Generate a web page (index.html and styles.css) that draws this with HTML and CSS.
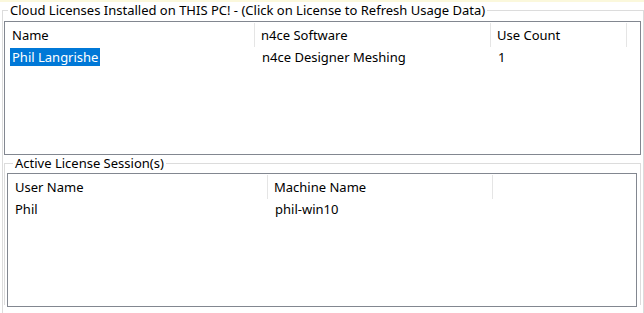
FILE: index.html
```html
<!DOCTYPE html>
<html>
<head>
<meta charset="utf-8">
<link rel="stylesheet" href="styles.css">
</head>
<body>
<div class="strip"></div>
<fieldset class="group group-outer">
  <legend class="legend legend-outer">Cloud Licenses Installed on THIS PC! - (Click on License to Refresh Usage Data)</legend>
  <div class="list list-licenses">
    <div class="row head">
      <div class="cell">Name</div>
      <div class="cell">n4ce Software</div>
      <div class="cell">Use Count</div>
      <div class="cell last"></div>
    </div>
    <div class="row item">
      <div class="cell"><span class="sel">Phil Langrishe</span></div>
      <div class="cell">n4ce Designer Meshing</div>
      <div class="cell">1</div>
      <div class="cell last"></div>
    </div>
  </div>
  <fieldset class="group group-inner">
    <legend class="legend legend-inner">Active License Session(s)</legend>
    <div class="list list-sessions">
      <div class="row head">
        <div class="cell">User Name</div>
        <div class="cell">Machine Name</div>
        <div class="cell last"></div>
      </div>
      <div class="row item">
        <div class="cell"><span class="plain">Phil</span></div>
        <div class="cell">phil-win10</div>
        <div class="cell last"></div>
      </div>
    </div>
  </fieldset>
</fieldset>
</body>
</html>
```
FILE: styles.css
```css
html, body {
  margin: 0;
  padding: 0;
  background: #ffffff;
  overflow: hidden;
}
body {
  width: 644px;
  height: 313px;
  font-family: "Noto Sans", "Open Sans", sans-serif;
  font-size: 13px;
  color: #000;
}
.strip {
  height: 2px;
  background: #fbf8dc;
}
.group {
  margin: 0;
  border: 1px solid #dcdcdc;
  border-bottom: none;
  min-width: 0;
}
.group-outer {
  margin-left: 2px;
  width: 642px;
  box-sizing: border-box;
  height: 311px;
  padding: 3px 2px 0 1px;
}
.legend {
  padding: 0 2px;
  line-height: 16px;
  height: 16px;
}
.legend-outer {
  margin-left: 4px;
}
.group-inner {
  padding: 2px 3px 0 2px;
  height: 150px;
  box-sizing: border-box;
}
.legend-inner {
  margin-left: 6px;
}
.list {
  border: 1px solid #828790;
  height: 134px;
  box-sizing: border-box;
  background: #fff;
}
.row {
  display: grid;
}
.list-licenses .row {
  grid-template-columns: 250px 236px 136px 1fr;
}
.list-sessions .row {
  grid-template-columns: 260px 225px 1fr;
}
.head {
  padding-top: 1px;
}
.head .cell {
  height: 24px;
  line-height: 25px;
  border-right: 1px solid #e5e5e5;
  padding-left: 6px;
  white-space: nowrap;
}
.head .cell:first-child {
  padding-left: 7px;
}
.head .cell.last {
  border-right: none;
}
.item .cell {
  height: 19px;
  line-height: 18px;
  padding-left: 7px;
  padding-top: 1px;
  white-space: nowrap;
}
.item .cell:first-child {
  padding-left: 5px;
}
.sel {
  display: inline-block;
  background: #0078d7;
  color: #fff;
  padding: 0 2px;
  height: 18px;
}
.plain {
  display: inline-block;
  padding: 0 2px;
}
```
